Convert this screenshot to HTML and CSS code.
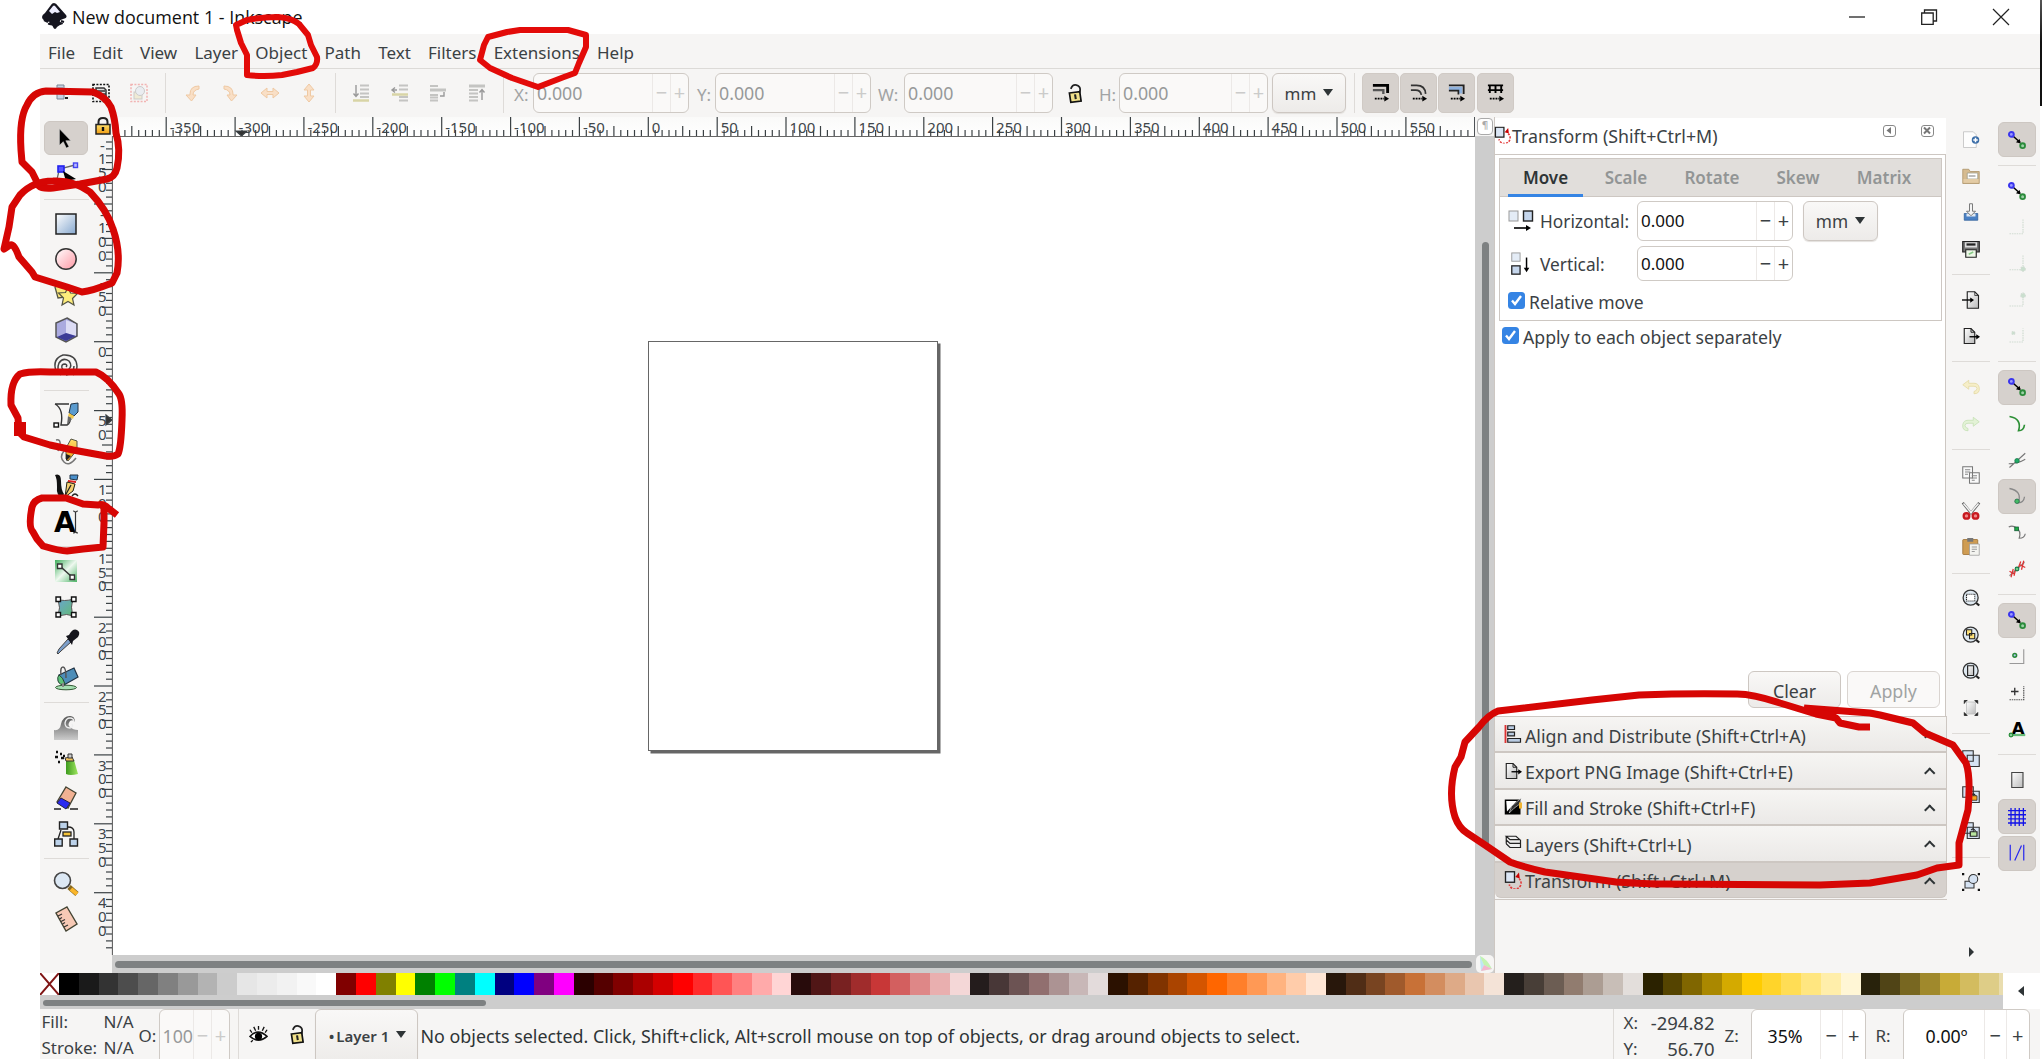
FILE: index.html
```html
<!DOCTYPE html>
<html lang="en">
<head>
<meta charset="utf-8">
<title>New document 1 - Inkscape</title>
<link rel="stylesheet" href="styles.css">
</head>
<body>
<svg class="defs" width="0" height="0">
  <defs>
    <linearGradient id="gBlue" x1="0" y1="0" x2="1" y2="1"><stop offset="0" stop-color="#fff"/><stop offset="1" stop-color="#86a8cf"/></linearGradient>
    <linearGradient id="gPink" x1="0" y1="0" x2="1" y2="1"><stop offset="0" stop-color="#fff"/><stop offset="1" stop-color="#ff98a4"/></linearGradient>
    <linearGradient id="gGreen" x1="0" y1="0" x2="1" y2="1"><stop offset="0" stop-color="#3fae5c"/><stop offset=".5" stop-color="#eef8ef"/><stop offset="1" stop-color="#4db567"/></linearGradient>
    <linearGradient id="gMesh" x1="0" y1="0" x2="1" y2="1"><stop offset="0" stop-color="#6aa5cf"/><stop offset="1" stop-color="#62bb74"/></linearGradient>
    <linearGradient id="gGrey" x1="0" y1="0" x2="1" y2="1"><stop offset="0" stop-color="#fff"/><stop offset="1" stop-color="#bbb"/></linearGradient>
    <linearGradient id="gWave" x1="0" y1="0" x2="0" y2="1"><stop offset="0" stop-color="#555"/><stop offset="1" stop-color="#ccc"/></linearGradient>
    <linearGradient id="gGold" x1="0" y1="0" x2="0" y2="1"><stop offset="0" stop-color="#ffe06a"/><stop offset="1" stop-color="#f09c12"/></linearGradient>
    <linearGradient id="gCan" x1="0" y1="0" x2="1" y2="0"><stop offset="0" stop-color="#3d9a1d"/><stop offset="1" stop-color="#9fe660"/></linearGradient>
    <symbol id="snap" viewBox="0 0 24 24"><path d="M7 7l9 8" stroke="#000" stroke-width="2"/><path d="M17 16.500l-6.500-1.500 5-4.500z" fill="#000"/><circle cx="4.500" cy="4.500" r="3.200" fill="#99f" stroke="#3a35ee" stroke-width="2.600"/><circle cx="19.500" cy="19.500" r="3.200" fill="#9ccfa6" stroke="#2a8a3a" stroke-width="2.400"/></symbol>
    <symbol id="xform" viewBox="0 0 24 24"><rect x="2" y="1" width="12" height="14" fill="#dbe6f5" stroke="#222" stroke-width="1.800"/><path d="M15 8l6 2-1-8z" fill="#c00"/><path d="M20 10a8 8 0 1 1-13 8" fill="none" stroke="#e23b3b" stroke-width="2.200" stroke-dasharray="3 1.600"/></symbol>
    <symbol id="padlock" viewBox="0 0 16 24"><path d="M3 7q2-5 6-4t4 5l-1 5" fill="none" stroke="#222" stroke-width="1.900"/><path d="M1.500 11.500l11-1.500 1.500 10-11 1.500z" fill="#f0e08a" stroke="#111" stroke-width="1.800"/><path d="M7.500 13l.8 5" stroke="#222" stroke-width="2.200"/></symbol>
    <symbol id="export" viewBox="0 0 24 24"><path d="M3 2h9l5 5v15H3z" fill="url(#gGrey)" stroke="#222" stroke-width="1.500"/><path d="M12 2v5h5" fill="none" stroke="#222" stroke-width="1.300"/><path d="M10 13h10" stroke="#000" stroke-width="1.800"/><path d="M24 13l-5-3.500v7z" fill="#000"/></symbol>
    <symbol id="lens" viewBox="0 0 24 24"><path d="M17 17l6 5" stroke="#222" stroke-width="3"/><circle cx="11.500" cy="11.500" r="10" fill="#dfe9f1" stroke="#333" stroke-width="1.700"/></symbol>
  </defs>
</svg>

<div class="app">
  <header class="titlebar">
    <svg class="logo" viewBox="0 0 26 26"><path d="M13 0q2 0 4 3l8 9q2 3-3 4-4 1-3 3 3 0 3 2-4 1-6 3-2 4-4 0 0-2-4-2-3-1 1-3-8-1-8-5 0-2 3-4l6-8q1-2 3-2z" fill="#15151f"/><path d="M8 8l4-5q1-1 2 0l5 6-3 1-2-1-3 2-2-2z" fill="#eef"/><path d="M3 17l4 2M20 18l3 1" stroke="#15151f" stroke-width="2"/></svg>
    <span class="title">New document 1 - Inkscape</span>
    <span class="winbtns">
      <svg viewBox="0 0 16 16"><path d="M0 8h16" stroke="#222" stroke-width="1.300"/></svg>
      <svg viewBox="0 0 16 16"><path d="M3.500 4V1h12v11h-3M.7 4h11.500v11.300H.7z" fill="none" stroke="#222" stroke-width="1.300"/></svg>
      <svg viewBox="0 0 16 16"><path d="M0 0l16 16M16 0L0 16" stroke="#222" stroke-width="1.200"/></svg>
    </span>
  </header>

  <nav class="menubar"><span>File</span><span>Edit</span><span>View</span><span>Layer</span><span>Object</span><span>Path</span><span>Text</span><span>Filters</span><span>Extensions</span><span>Help</span></nav>

  <div class="toolbar">
    <div class="tgroup g1">
      <svg viewBox="0 0 20 20"><path d="M4 2h7v14H4zM5 5h5M5 9h5" fill="#c6d3e4" stroke="#7b8796"/><path d="M12 10h3v2h-3zM12 14h3v2h-3z" fill="#222"/></svg>
      <svg viewBox="0 0 20 20"><rect x="2" y="1.500" width="16" height="17" fill="none" stroke="#111" stroke-width="1.600" stroke-dasharray="2 1.400"/><path d="M5 5h8l2 2v7H7l-2-2zM5 8h9M6 11h9" fill="#ddd" stroke="#333" stroke-width="1.500"/></svg>
      <svg viewBox="0 0 20 20" opacity=".45"><rect x="2" y="1.500" width="16" height="17" fill="none" stroke="#e66" stroke-width="1.500" stroke-dasharray="2 1.400"/><rect x="5" y="9" width="8" height="7" fill="#e9dfb0" stroke="#999"/><circle cx="11" cy="8" r="4.500" fill="#dde4ee" stroke="#999"/></svg>
    </div>
    <div class="tgroup g2">
      <svg viewBox="0 0 20 20"><path d="M17 3q-9 0-9 8v1H4l5.500 6L14 12h-3q0-5 6-6z"/></svg>
      <svg viewBox="0 0 20 20"><path d="M3 3q9 0 9 8v1h4l-5.500 6L6 12h3q0-5-6-6z"/></svg>
      <svg viewBox="0 0 20 20"><path d="M1 10l6-5v3.500h6V5l6 5-6 5v-3.500H7V15z"/></svg>
      <svg viewBox="0 0 20 20"><path d="M10 1l5 6h-3.500v6H15l-5 6-5-6h3.500V7H5z"/></svg>
    </div>
    <div class="tgroup g3">
      <svg viewBox="0 0 20 20"><path d="M9 2.500h9M9 6.500h9M9 10.500h9M9 14h9"/><path class="y" d="M2 17.500h16"/><path class="a" d="M5 2v11M2.500 10.500L5 13.500l2.500-3"/></svg>
      <svg viewBox="0 0 20 20"><path d="M9 2.500h9M9 6.500h9M9 14h9M9 17.500h9"/><path class="y" d="M2 11.500h16"/><path class="a" d="M7 7H2M5 4.500L2 7l3 2.500"/></svg>
      <svg viewBox="0 0 20 20"><path d="M2 3h8M2 12h8M2 17.500h8M2 14.500h8"/><path d="M2 7h16" stroke-width="3"/><path class="a" d="M12 13h4v-4"/></svg>
      <svg viewBox="0 0 20 20"><path d="M2 3h16" stroke-width="3"/><path d="M2 7h9M2 10.500h9M2 14h9M2 17.500h9"/><path class="a" d="M15 17V7M12.500 9.500L15 6.500l2.500 3"/></svg>
    </div>
    <label class="lx">X:</label><div class="spin off sx"><b>0.000</b><i>−</i><i>+</i></div>
    <label class="ly">Y:</label><div class="spin off sy"><b>0.000</b><i>−</i><i>+</i></div>
    <label class="lw">W:</label><div class="spin off sw"><b>0.000</b><i>−</i><i>+</i></div>
    <svg class="tlock" viewBox="0 0 16 24"><use href="#padlock"/></svg>
    <label class="lh">H:</label><div class="spin off sh"><b>0.000</b><i>−</i><i>+</i></div>
    <button class="drop">mm<u></u></button>
    <div class="toggles">
      <svg viewBox="0 0 20 20"><path d="M2 3h15.500v8" fill="none" stroke="#000" stroke-width="3"/><path d="M2 8h11v4" fill="none" stroke="#555" stroke-width="2.500"/><path d="M4 17h10" stroke="#000" stroke-width="2" stroke-dasharray="2 1"/><path d="M19 17l-5-3v6z"/></svg>
      <svg viewBox="0 0 20 20"><path d="M2 3h6q9 0 9.500 9M2 8h5q5 0 6 5" fill="none" stroke="#333" stroke-width="1.800"/><path d="M4 17h10" stroke="#000" stroke-width="2" stroke-dasharray="2 1"/><path d="M19 17l-5-3v6z"/></svg>
      <svg viewBox="0 0 20 20"><path d="M2 3h15.500v9" fill="none" stroke="#222" stroke-width="2"/><path d="M2 4.500h14v7h-4v-3H2z" fill="#8fb2de"/><path d="M2 8.500h10v4" fill="none" stroke="#222" stroke-width="1.800"/><path d="M4 17h10" stroke="#000" stroke-width="2" stroke-dasharray="2 1"/><path d="M19 17l-5-3v6z"/></svg>
      <svg viewBox="0 0 20 20"><path d="M2 3h16M2 8h16M4 2v9M10 2v9M16 2v9" fill="none" stroke="#000" stroke-width="2"/><path d="M4 17h10" stroke="#000" stroke-width="2" stroke-dasharray="2 1"/><path d="M19 17l-5-3v6z"/></svg>
    </div>
  </div>

  <main class="work">
    <aside class="toolbox">
      <span class="t on"><svg viewBox="0 0 24 24"><path d="M7 2v18l4.200-4 3.300 7 3-1.500-3.500-6.500h5.500z" fill="#000" stroke="#ddd" stroke-width=".6"/></svg></span>
      <span class="t"><svg viewBox="0 0 24 24"><path d="M3 22Q3 8 9 6l12-3" fill="none" stroke="#666" stroke-width="1.300"/><rect x="4" y="4" width="6" height="6" fill="#55f" stroke="#22e" stroke-width="1.600"/><rect x="19.500" y="1" width="4" height="4.500" fill="#bbf" stroke="#44e" stroke-width="1.400"/><rect x="1" y="20" width="4" height="4" fill="#bbf" stroke="#44e" stroke-width="1.400"/><path d="M9 9l13 8-5 1 6 6-3 1-5-6-2 4z"/></svg></span>
      <hr>
      <span class="t"><svg viewBox="0 0 24 24"><rect x="2" y="2" width="20" height="20" fill="url(#gBlue)" stroke="#222" stroke-width="1.500"/></svg></span>
      <span class="t"><svg viewBox="0 0 24 24"><circle cx="12" cy="12" r="10.200" fill="url(#gPink)" stroke="#333" stroke-width="1.500"/></svg></span>
      <span class="t"><svg viewBox="0 0 24 24"><path d="M1 4l7-3 7 3-3 10-8 1z" fill="#fbe77a" stroke="#554" stroke-width="1.300"/><path d="M14 4l2.500 6 7 .5-5 5 1.500 6.500-6-3.500-6 3.500 1.500-7-5-5 7-.5z" fill="#fdec7c" stroke="#554" stroke-width="1.200"/></svg></span>
      <span class="t"><svg viewBox="0 0 24 24"><path d="M13 0l10 6v12l-11 6-10-5V5z" fill="#aaaadf" stroke="#555" stroke-width="1.500"/><path d="M12 2v13l10 3V6z" fill="#dcdcf4"/><path d="M12 15l-9 4 9 4 10-5z" fill="#3c3c96"/></svg></span>
      <span class="t"><svg viewBox="0 0 24 24"><path d="M12 13q2-2-1-3-4 0-3 4 2 4 6 2 5-4 1-9-6-4-10 2-3 7 2 12M2 17Q-2 5 9 1q13-1 14 11 0 6-4 9M20 12q0 8-8 9" fill="none" stroke="#444" stroke-width="1.500"/></svg></span>
      <hr>
      <span class="t"><svg viewBox="0 0 24 24"><path d="M1 1h14M1 1q9 5 6 21h6q4-2 3-8" fill="none" stroke="#333" stroke-width="1.400"/><rect x="0" y="20" width="4.500" height="4" fill="#fff" stroke="#111" stroke-width="1.400"/><path d="M17 1l7-1v9l-4 4-5-3z" fill="#5b9bcf" stroke="#234"/><path d="M15 10l5 3-1 3-5-3z" fill="#f1c84a"/><path d="M14 13l4 3-5 6z" fill="#666"/></svg></span>
      <span class="t"><svg viewBox="0 0 24 24"><path d="M2 1q5-1 4 5l-2 6M10 12Q5 18 10 23t12-4" fill="none" stroke="#777" stroke-width="1.500"/><path d="M17 0l6 2v9l-9 11-2-2V9z" fill="url(#gGold)" stroke="#554"/><path d="M12 15l5 2-5 5z" fill="#222"/></svg></span>
      <span class="t"><svg viewBox="0 0 24 24"><path d="M1 1q6-2 6 6 0 9 3 13l-2 4q-6-3-5-11Q3 4 1 1z" fill="#111"/><path d="M16 1l8 0-1 5-7-1z" fill="#4a90cc" stroke="#234"/><path d="M14 6l8 1v2l-8-1z" fill="#d22"/><path d="M13 8l8 2-2 7-8 6z" fill="#f4cf70" stroke="#221"/><path d="M17 11l-6 11M18 22q3-4 6 0" fill="none" stroke="#222" stroke-width="1.300"/></svg></span>
      <span class="t"><svg viewBox="0 0 24 24"><text x="0" y="22" class="atext">A</text><path d="M19 1q2 0 2.500 1.500Q22 1 24 1M21.500 2v20M19 23q2 0 2.500-1.500Q22 23 24 23" fill="none" stroke="#333" stroke-width="1.200"/></svg></span>
      <hr>
      <span class="t"><svg viewBox="0 0 24 24"><rect x="1" y="1" width="22" height="22" fill="url(#gGreen)"/><path d="M7 8l11 10" stroke="#333" stroke-width="1.500"/><path d="M3.500 5h4.500v4.500H3.500zM16 16h4.500v4.500H16z" fill="#fff" stroke="#333" stroke-width="1.400"/></svg></span>
      <span class="t"><svg viewBox="0 0 24 24"><path d="M4 4q5 3 16 0-5 8 0 17-7-3-16 0 3-8 0-17z" fill="url(#gMesh)" stroke="#555"/><path d="M2 2h4.500v4.500H2zM17.500 2H22v4.500h-4.500zM2 17.500h4.500V22H2zM17.500 17.500H22V22h-4.500z" fill="#fff" stroke="#111" stroke-width="1.400"/></svg></span>
      <span class="t"><svg viewBox="0 0 24 24"><path d="M14 9l3 3L7 21l-3 3-1-1 2-4z" fill="#7d9fca" stroke="#444"/><path d="M12 6l3-1q4-7 8-5t1 7l-5 4-1 4z" fill="#15151c"/></svg></span>
      <span class="t"><svg viewBox="0 0 24 24"><ellipse cx="12" cy="21.500" rx="10.500" ry="2.300" fill="#a5e0b2" stroke="#353"/><path d="M5 9L20 2l4 9-14 8z" fill="#4d8db8" stroke="#234" stroke-width="1.200"/><path d="M5 9q4 2 6 9-5 2-7-3-1-4 1-6z" fill="#5fc27a" stroke="#243"/><path d="M7 9q-1-8 2-8t3 11" fill="none" stroke="#555" stroke-width="1.500"/><path d="M9 17v4" stroke="#888" stroke-width="2"/></svg></span>
      <hr>
      <span class="t"><svg viewBox="0 0 24 24"><path d="M0 14q6 1 7-6 2-8 9-8 5 0 5 6-2-3-5-1-3 4 0 6 3 3 8 3v10H0z" fill="url(#gWave)"/><path d="M20 6q0-4-4-4t-5 5q0 5 5 5 4-1 2-4" fill="none" stroke="#eee" stroke-width="1.300"/></svg></span>
      <span class="t"><svg viewBox="0 0 24 24"><path d="M12 9l8 0 4 14q-8 2-12 0z" fill="url(#gCan)"/><path d="M11 7l7-1 2 4h-8z" fill="#f0c15a" stroke="#333"/><path d="M14 3h4v4h-4z" fill="#ccc" stroke="#333"/><path d="M2 1h2M6 3h2M1 6h3M7 7h3M9 5h2M4 11h2" stroke="#111" stroke-width="2.400"/></svg></span>
      <span class="t"><svg viewBox="0 0 24 24"><path d="M12 1l10 6-8 15-11-6z" fill="#f1b193" stroke="#443" stroke-width="1.300"/><path d="M7 12l9 5-4 6-9-6z" fill="#2a2af0" stroke="#224"/><path d="M0 23h7M16 23h8" stroke="#222" stroke-width="1.500"/></svg></span>
      <span class="t"><svg viewBox="0 0 24 24"><path d="M7 8L4 17M14 5q6 0 6 5v8" fill="none" stroke="#222" stroke-width="1.300"/><path d="M5.500 0h8v7h-8zM.7 17h7.500v7H.7zM16 17h7.500v7H16z" fill="#bcd2ea" stroke="#222" stroke-width="1.400"/><rect x="9" y="10" width="8" height="4" fill="#f5c338" stroke="#222" stroke-width="1.300"/></svg></span>
      <hr>
      <span class="t"><svg viewBox="0 0 24 24"><path d="M15 15l8 7" stroke="#8a6a20" stroke-width="5"/><path d="M17 17l6 5" stroke="#fbb62a" stroke-width="4"/><circle cx="8.500" cy="8.500" r="8" fill="#dce8f4" stroke="#444" stroke-width="1.600"/></svg></span>
      <span class="t"><svg viewBox="0 0 24 24"><path d="M13 0l10 17-11 7L2 6z" fill="#f7c9b5" stroke="#443" stroke-width="1.400"/><path d="M4 9l4-2M5.500 12L8 10.500M7 14.500l4-2M8.500 17l2.500-1.500M10 20l4-2" stroke="#333" stroke-width="1.200"/></svg></span>
    </aside>

    <section class="stage">
      <div class="corner"><svg viewBox="0 0 18 18"><path d="M4.500 8V5q0-4 4.500-4t4.500 4v3" fill="none" stroke="#222" stroke-width="2"/><rect x="2" y="7.500" width="14" height="9.500" fill="url(#gGold)" stroke="#222" stroke-width="1.500"/><path d="M9 10v4" stroke="#111" stroke-width="2.400"/></svg></div>
      <svg class="hruler" id="hruler" width="1362" height="20"></svg>
      <div class="cornerR"><span>¶</span></div>
      <svg class="vruler" id="vruler" width="22" height="837"></svg>
      <div class="canvas"><div class="page"></div></div>
      <div class="vscroll"><span></span></div>
      <div class="blank"></div>
      <div class="hscroll"><span></span></div>
      <div class="cms"><svg viewBox="0 0 18 18"><path d="M4 1L5 16l11-2Q11 4 4 1z" fill="#d6f0e2"/><path d="M4 1l4 9-3 6z" fill="#bfe6f5"/><path d="M4 1q7 3 12 13l-8-4z" fill="#c4f3b0"/><path d="M8 10l8 4-11 2z" fill="#f3b6cd"/></svg></div>
    </section>

    <section class="dock">
      <div class="dockhead"><svg viewBox="0 0 24 24"><use href="#xform"/></svg><span>Transform (Shift+Ctrl+M)</span>
        <em><svg viewBox="0 0 10 9"><path d="M7 1v7L2.500 4.500z"/></svg></em><em><svg viewBox="0 0 10 9"><path d="M2 1.500l6 6M8 1.500l-6 6" stroke="#777" stroke-width="2"/></svg></em></div>
      <div class="panel">
        <div class="book">
          <div class="tabs"><span class="cur">Move</span><span>Scale</span><span>Rotate</span><span>Skew</span><span>Matrix</span></div>
          <div class="row r1"><svg viewBox="0 0 26 22"><rect x="1" y="1" width="9" height="10" fill="#e4ecf6" stroke="#999"/><rect x="15.500" y="1" width="9" height="10" fill="#c5d6ec" stroke="#222" stroke-width="1.400"/><path d="M6 18h13" stroke="#000" stroke-width="1.600"/><path d="M23 18l-5-3v6z"/></svg><label>Horizontal:</label><div class="spin"><b>0.000</b><i>−</i><i>+</i></div><button class="drop">mm<u></u></button></div>
          <div class="row r2"><svg viewBox="0 0 26 26"><rect x="3" y="1" width="9" height="9" fill="#e4ecf6" stroke="#999"/><rect x="3" y="15" width="9" height="9" fill="#c5d6ec" stroke="#222" stroke-width="1.400"/><path d="M19 6v12" stroke="#000" stroke-width="1.600"/><path d="M19 22l-3-5h6z"/></svg><label>Vertical:</label><div class="spin"><b>0.000</b><i>−</i><i>+</i></div></div>
          <div class="check c1"><svg viewBox="0 0 17 17"><path d="M4 8.500l3 3.500 6-8"/></svg>Relative move</div>
        </div>
        <div class="check c2"><svg viewBox="0 0 17 17"><path d="M4 8.500l3 3.500 6-8"/></svg>Apply to each object separately</div>
        <div class="actions"><button>Clear</button><button class="dis">Apply</button></div>
      </div>
      <div class="stack">
        <div><svg viewBox="0 0 24 24"><path d="M2 0v24" stroke="#d33" stroke-width="2.500"/><path d="M5 1h9v5H5zM5 9.500h9v5H5zM5 18h17v5H5z" fill="#b9cbe2" stroke="#222" stroke-width="1.600"/></svg>Align and Distribute (Shift+Ctrl+A)<s></s></div>
        <div><svg viewBox="0 0 24 24"><use href="#export"/></svg>Export PNG Image (Shift+Ctrl+E)<s></s></div>
        <div><svg viewBox="0 0 24 24"><rect x="1" y="2" width="21" height="20"/><path d="M3 4h14L4 18z" fill="#fff"/><path d="M23 0l-2 8-8 6-6 6 3-9z" fill="#333" stroke="#fff" stroke-width=".7"/><path d="M20 6l4 0v8h-4z" fill="#f2b632"/></svg>Fill and Stroke (Shift+Ctrl+F)<s></s></div>
        <div><svg viewBox="0 0 24 24"><path d="M3 3h13l5 4.500H8zM3 8l5 4.500h14M3 13l5 5h14V7.500M3 3v10" fill="#eee" stroke="#222" stroke-width="1.600"/></svg>Layers (Shift+Ctrl+L)<s></s></div>
        <div class="sel"><svg viewBox="0 0 24 24"><use href="#xform"/></svg>Transform (Shift+Ctrl+M)<s></s></div>
      </div>
    </section>

    <aside class="bar cmds">
      <span class="t"><svg viewBox="0 0 24 24"><path d="M2 1h13l4 4v17H2z" fill="#fdfdfd" stroke="#bbb"/><circle cx="18" cy="12" r="5" fill="#3c6ea8"/><path d="M18 9v6M15 12h6" stroke="#fff" stroke-width="2"/></svg></span>
      <span class="t"><svg viewBox="0 0 24 24"><path d="M1 3h8l2 3h12v16H1z" fill="#d6bb90" stroke="#a98f62"/><path d="M7 8h14v8H7z" fill="#fff" stroke="#998"/><path d="M9 12h9" stroke="#888" stroke-width="1.500"/><path d="M2 16h20v5H2z" fill="#e3cba4"/></svg></span>
      <span class="t"><svg viewBox="0 0 24 24"><path d="M3 14h18v9H3z" fill="#4a80c4" stroke="#2d5c98"/><path d="M6 14h12v4H6z" fill="#dfe8f2"/><path d="M10 1h4v10h4l-6 6-6-6h4z" fill="#f4f4f4" stroke="#777" stroke-width="1.300"/></svg></span>
      <span class="t"><svg viewBox="0 0 24 24"><path d="M1 2h22v14H1z" fill="#777" stroke="#222" stroke-width="1.600"/><path d="M4 3h16v7H4z" fill="#ddd"/><path d="M6 6h12" stroke="#222" stroke-width="3"/><path d="M5 13h14v10H5z" fill="#eef8e8" stroke="#222" stroke-width="1.500"/><path d="M9 19l6-3" stroke="#8c8" stroke-width="2"/></svg></span>
      <hr>
      <span class="t"><svg viewBox="0 0 24 24"><path d="M7 1h10l5 5v17H7z" fill="url(#gGrey)" stroke="#222" stroke-width="1.500"/><path d="M17 1v5h5" fill="none" stroke="#222"/><path d="M0 12h12" stroke="#000" stroke-width="1.800"/><path d="M16 12l-5-3.500v7z"/></svg></span>
      <span class="t"><svg viewBox="0 0 24 24"><use href="#export"/></svg></span>
      <hr>
      <span class="t"><svg viewBox="0 0 24 24"><path d="M9 3L1 9l8 6v-4h7q4 0 4 3t-4 4v3q8 0 7-8-1-6-7-6H9z" fill="#f6eec8" stroke="#e2d79f"/></svg></span>
      <span class="t"><svg viewBox="0 0 24 24"><path d="M15 3l8 6-8 6v-4H8q-4 0-4 3t4 4v3q-8 0-7-8 1-6 7-6h7z" fill="#e3f2d6" stroke="#c2dfb0"/></svg></span>
      <hr>
      <span class="t"><svg viewBox="0 0 24 24"><path d="M1 1h13v15H1zM10 9h13v14H10z" fill="#fafafa" stroke="#777" stroke-width="1.400"/><path d="M4 5h7M4 8h7M4 11h4M13 13h7M13 16h7M13 19h4" stroke="#888" stroke-width="1.400"/></svg></span>
      <span class="t"><svg viewBox="0 0 24 24"><path d="M1 1l12 15M23 1L11 16" stroke="#666" stroke-width="3.600"/><path d="M2 2l11 13M22 2L11 15" stroke="#f2f2f2" stroke-width="2"/><circle cx="6" cy="18.500" r="3.800" fill="#e88" stroke="#c8191f" stroke-width="3"/><circle cx="18" cy="18.500" r="3.800" fill="#e88" stroke="#c8191f" stroke-width="3"/></svg></span>
      <span class="t"><svg viewBox="0 0 24 24"><rect x="1" y="2" width="20" height="20" rx="1" fill="#cf9c52" stroke="#97692b"/><rect x="7" y="0" width="8" height="5" fill="#777"/><path d="M10 8h13v15H10z" fill="#f4f4f0" stroke="#999"/><path d="M13 12h7M13 15h7M13 18h4" stroke="#999" stroke-width="1.300"/></svg></span>
      <hr>
      <span class="t"><svg viewBox="0 0 24 24"><use href="#lens"/><rect x="6" y="7" width="11" height="9" fill="#fff" stroke="#222" stroke-width="1.500" stroke-dasharray="1.500 1.200"/></svg></span>
      <span class="t"><svg viewBox="0 0 24 24"><use href="#lens"/><path d="M6 5h7v7H6zM10 10h7v7h-7z" fill="#ffe27a" stroke="#222" stroke-width="1.400"/></svg></span>
      <span class="t"><svg viewBox="0 0 24 24"><use href="#lens"/><path d="M7.500 5h8v13h-8z" fill="url(#gGrey)" stroke="#222" stroke-width="1.600"/></svg></span>
      <span class="t"><svg viewBox="0 0 24 24"><path d="M6 4h12v16H6z" fill="url(#gGrey)" stroke="#bbb"/><path d="M3 6V2h4l-2 1zM17 2h4v4l-2-2zM3 18v4h4l-2-2zM17 22h4v-4l-2 2z" fill="#222" stroke="#222"/></svg></span>
      <hr>
      <span class="t"><svg viewBox="0 0 24 24"><path d="M1 1h14v14H1zM7 7h16v15H7z" fill="#d5e2f2" stroke="#333" stroke-width="1.500"/></svg></span>
      <span class="t"><svg viewBox="0 0 24 24"><path d="M1 1h14v14H1zM7 7h16v15H7z" fill="#d5e2f2" stroke="#333" stroke-width="1.500"/><path d="M12 13q3-5 6 0" fill="none" stroke="#222" stroke-width="1.500"/><path d="M11 13h9v6h-9z" fill="#f5a623" stroke="#222"/></svg></span>
      <span class="t"><svg viewBox="0 0 24 24"><path d="M1 1h14v14H1zM7 7h16v15H7z" fill="#d5e2f2" stroke="#333" stroke-width="1.500"/><path d="M12 11q3-4 6 1" fill="none" stroke="#222" stroke-width="1.500"/><path d="M11 13h9v6h-9z" fill="#b9e59f" stroke="#222" stroke-width="1.600"/></svg></span>
      <hr>
      <span class="t"><svg viewBox="0 0 24 24"><path d="M4 11h12v9H4z" fill="#d5e2f2" stroke="#333" stroke-width="1.400"/><circle cx="15" cy="8" r="6" fill="#d5e2f2" stroke="#333" stroke-width="1.400"/><path d="M0 0h3v3H0zM21 0h3v3h-3zM0 21h3v3H0zM21 21h3v3h-3z" fill="#111"/></svg></span>
      <span class="more"></span>
    </aside>

    <aside class="bar snaps">
      <span class="t on"><svg viewBox="0 0 24 24"><use href="#snap"/></svg></span>
      <hr>
      <span class="t"><svg viewBox="0 0 24 24"><use href="#snap"/></svg></span>
      <span class="t"><svg viewBox="0 0 24 24" class="faint"><path d="M2 21h18V2"/></svg></span>
      <span class="t"><svg viewBox="0 0 24 24" class="faint g"><path d="M2 21h18V2"/><circle cx="20" cy="20" r="3"/></svg></span>
      <span class="t"><svg viewBox="0 0 24 24" class="faint g"><path d="M2 20h18V2"/><circle cx="20" cy="6" r="3"/></svg></span>
      <span class="t"><svg viewBox="0 0 24 24" class="faint g"><path d="M2 20h18V2"/><circle cx="7" cy="8" r="2"/></svg></span>
      <hr>
      <span class="t on"><svg viewBox="0 0 24 24"><use href="#snap"/></svg></span>
      <span class="t"><svg viewBox="0 0 24 24"><path d="M2 2q17 3 12 19 7 0 8-8" fill="none" stroke="#2c8f35" stroke-width="2.200"/></svg></span>
      <span class="t"><svg viewBox="0 0 24 24"><path d="M2 22L23 3M1 17q12 0 22-6" fill="none" stroke="#777" stroke-width="1.500"/><circle cx="12" cy="13" r="3" fill="#2a6" stroke="#174"/></svg></span>
      <span class="t on"><svg viewBox="0 0 24 24"><path d="M2 2q17 3 12 19 7 0 8-8" fill="none" stroke="#888" stroke-width="1.700"/><circle cx="12" cy="19" r="3" fill="#4b6" stroke="#264"/></svg></span>
      <span class="t"><svg viewBox="0 0 24 24"><path d="M1 4q5-3 10 1 7 4 4 14 7 0 8-6" fill="none" stroke="#777" stroke-width="1.600"/><rect x="9" y="4" width="5" height="5" fill="#2a4" stroke="#153"/></svg></span>
      <span class="t"><svg viewBox="0 0 24 24"><path d="M2 21L22 3" stroke="#888" stroke-width="1.500"/><path d="M2 15l7 4M4 23l3-11M8 21l2-8M14 10l3-8M15 6l8 4M18 13l3-12" stroke="#d33" stroke-width="1.700"/><circle cx="12" cy="12" r="2.500" fill="#7c8" stroke="#174" stroke-width="1.400"/></svg></span>
      <hr>
      <span class="t on"><svg viewBox="0 0 24 24"><use href="#snap"/></svg></span>
      <span class="t"><svg viewBox="0 0 24 24"><path d="M2 22h19V3" fill="none" stroke="#999" stroke-width="1.500"/><circle cx="9" cy="11" r="2.500" fill="#ace" stroke="#2a8a3a" stroke-width="2"/></svg></span>
      <span class="t"><svg viewBox="0 0 24 24"><path d="M2 21h19V3" fill="none" stroke="#555" stroke-width="1.600" stroke-dasharray="2 1"/><path d="M9 5v10M4 10h10" stroke="#333" stroke-width="1.800"/></svg></span>
      <span class="t"><svg viewBox="0 0 24 24"><path d="M4 20h19" stroke="#6b7" stroke-width="3"/><text x="5" y="19" class="snaptext">A</text><circle cx="4" cy="20" r="2.500" fill="#8c9" stroke="#283" stroke-width="1.500"/></svg></span>
      <hr>
      <span class="t"><svg viewBox="0 0 24 24"><path d="M5 2h15v20H5z" fill="url(#gGrey)" stroke="#444" stroke-width="1.500"/></svg></span>
      <span class="t on"><svg viewBox="0 0 24 24"><path d="M4 0v24M9.500 0v24M15 0v24M20.500 0v24M0 3.500h24M0 9h24M0 14.500h24M0 20h24" stroke="#1313e8" stroke-width="1.700"/></svg></span>
      <span class="t on"><svg viewBox="0 0 24 24"><path d="M3 1v21M21 1v21M9 22L18 2" stroke="#2626ee" stroke-width="1.600"/></svg></span>
    </aside>
  </main>

  <div class="palette" id="palette"><svg class="none" viewBox="0 0 19 22"><path d="M0 0l19 22M19 0L0 22" stroke="#801515" stroke-width="2"/></svg></div>
  <div class="palscroll"><span></span></div>

  <footer class="status">
    <div class="fs"><span>Fill:</span><span>N/A</span><span>Stroke:</span><span>N/A</span></div>
    <label class="lo">O:</label><div class="spin off so"><b>100</b><i>−</i><i>+</i></div>
    <div class="icons">
      <svg class="eye" viewBox="0 0 20 20"><path d="M1 12q8-9 18 0-9 8-18 0z" fill="#fff" stroke="#111" stroke-width="1.600"/><circle cx="10" cy="12" r="3.800"/><path d="M3 8L1 5M7 6L5 2M10 5V1M14 6l2-4M17 8l2-3M4 16l-2 2" stroke="#111" stroke-width="1.400"/></svg>
      <svg class="lk" viewBox="0 0 16 24"><use href="#padlock"/></svg>
    </div>
    <button class="drop layer"><span>•</span>Layer 1<u></u></button>
    <p>No objects selected. Click, Shift+click, Alt+scroll mouse on top of objects, or drag around objects to select.</p>
    <div class="xy"><span>X:</span><span>-294.82</span><span>Y:</span><span>56.70</span></div>
    <label class="lz">Z:</label><div class="spin sz"><b>35%</b><i>−</i><i>+</i></div>
    <label class="lr">R:</label><div class="spin sr"><b>0.00º</b><i>−</i><i>+</i></div>
  </footer>
</div>

<div class="edge"></div>
<span class="palmenu"></span>
<svg class="ink" width="2042" height="1059" viewBox="0 0 2042 1059">
  <g class="bright">
    <path d="M236 25L247 20Q262 17 278 17Q292 18 299 24L308 35L311 45L317 57Q318 64 313 68L297 72L282 75Q264 77 247 75L247 55L241 43L237 30Z"/>
    <path d="M480 60L484 45L488 37L507 32L520 30H568L586 35V47L579 63L575 73L564 77L538 87L512 78L490 68Z"/>
  </g>
  <path d="M22 162L21 150Q19 118 27 105Q33 92 46 91L93 92Q106 97 111 107Q115 118 116 133Q121 150 117 168Q115 177 107 179L80 184L53 188Q42 189 39 186L32 172Z"/>
  <path d="M4 249L9 227L12 207L20 195Q33 181 53 181Q74 180 90 192Q107 210 113 229Q121 252 117 273L112 283Q92 291 82 292L67 287L35 277L32 272L19 257Q14 243 10 245Z"/>
  <path d="M19 432L18 418L11 405Q10 382 20 374Q30 371 50 372L96 372Q108 377 119 394Q123 400 122 420Q121 448 118 454Q114 457 106 456L73 450L50 445L24 437Z"/>
  <path d="M117 515L108 508Q103 503 98 505L83 504L66 498H42Q34 500 32 507Q28 527 33 532L37 539L43 546Q60 551 67 551L83 549L103 547L104 523V506"/>
  <path d="M20 422v14" stroke-width="12"/>
  <g transform="translate(-2 0)">
    <path d="M1872 727H1861L1842 723L1838 718L1818 714L1782 703Q1755 694 1739 694Q1690 693 1641 695L1594 700L1500 711Q1490 715 1481 727L1467 742L1463 757L1457 767Q1450 795 1457 817Q1461 828 1469 833L1487 845L1512 862Q1525 867 1547 872Q1590 878 1618 882Q1650 884 1665 884L1822 885L1872 883L1919 875L1939 868L1961 865V843L1970 810Q1973 777 1968 763L1955 745L1927 733L1915 723L1882 715L1872 713L1806 708"/>
    <path d="M1816 712L1838 716" stroke-width="7"/>
  </g>
</svg>
<script src="app.js"></script>
</body>
</html>
```
FILE: styles.css
```css
* { box-sizing: border-box; }
body { margin: 0; width: 2042px; height: 1059px; overflow: hidden; background: #fff; font: 17px/20px "Noto Sans", sans-serif; color: #3b4144; }
button { font: inherit; color: inherit; padding: 0; }
hr { margin: 0; border: 0; }
.defs { position: absolute; }
.app { margin-left: 40px; width: 2000px; height: 1059px; display: flex; flex-direction: column; overflow: hidden; }
.app > * { flex: none; }

.titlebar { height: 34px; display: flex; align-items: center; background: #fff; margin-left: -2px; }
.logo { width: 26px; height: 26px; margin: 0 0 2px 3px; }
.title { font: 17.900px/20px "Open Sans", sans-serif; color: #111; margin-left: 5px; white-space: nowrap; }
.winbtns { margin-left: auto; display: flex; gap: 56px; margin-right: 31px; }
.winbtns svg { width: 16px; height: 16px; overflow: visible; }

.menubar { height: 35px; background: #f6f5f4; border-bottom: 1px solid #dcdad7; display: flex; align-items: center; padding: 4px 0 0 8px; gap: 17.200px; }

.toolbar { height: 48px; background: #f6f5f4; display: flex; align-items: center; padding-top: 0; }
.tgroup { height: 40px; border-right: 1px solid #dedbd8; display: flex; align-items: center; }
.tgroup svg { width: 20px; height: 20px; }
.g1 { width: 126px; padding-left: 13px; gap: 18px; }
.g2 { width: 170px; padding-left: 16px; gap: 19px; }
.g2 svg { fill: #f9dfc6; stroke: #efc9a3; }
.g3 { width: 168px; padding-left: 15px; gap: 18.500px; }
.g3 svg { fill: none; stroke: #c4c4c2; stroke-width: 1.800; }
.g3 .y { stroke: #d8d4a6; stroke-width: 2.500; }
.g3 .a { stroke: #999; stroke-width: 1.400; }
.toolbar label { color: #a2a4a4; padding-top: 3px; }
.lx { width: 29px; padding-left: 10px; }
.ly { width: 26px; padding-left: 8px; }
.lw { width: 33px; padding-left: 7px; }
.lh { width: 36px; padding-left: 16px; }
.spin { height: 40px; display: flex; align-items: stretch; background: #fff; border: 1.500px solid #cfcac5; border-radius: 6px; overflow: hidden; color: #3b4144; }
.spin b { flex: 1; font-weight: 400; font-size: 17.800px; display: flex; align-items: center; padding-left: 3px; color: #111; white-space: nowrap; }
.spin i { width: 18px; flex: none; font-style: normal; font-size: 20px; display: flex; align-items: center; justify-content: center; border-left: 1px solid #ece9e7; }
.off { background: #faf9f8; }
.off b { color: #97999a; }
.off i { color: #cbcbca; }
.sx { width: 156px; } .sy { width: 156px; } .sw { width: 149px; } .sh { width: 149px; }
.tlock { width: 15px; height: 23px; margin-left: 15px; }
.drop { height: 40px; border: 1.500px solid #cdc7c2; border-radius: 6px; background: linear-gradient(#f9f8f7, #edebe9); display: flex; align-items: center; justify-content: center; box-shadow: 0 1px 1px #e3e0dd; padding-top: 2px; }
.drop u { border: 5px solid transparent; border-top: 7px solid #2e3436; border-bottom: 0; margin-left: 7px; margin-top: -3px; }
.toolbar .drop { width: 74px; margin-left: 4px; }
.toggles { display: flex; gap: 1.200px; margin-left: 8px; padding-left: 7px; border-left: 1px solid #dedbd8; }
.toggles svg { width: 37px; height: 40px; padding: 8px 8px 10px; background: #d6d1cd; border-radius: 5px; border: 1px solid #d0cac5; }

.work { height: 856px; display: flex; background: #f6f5f4; }
.toolbox { width: 53px; padding-top: 4px; display: flex; flex-direction: column; }
.t { flex: none; display: flex; align-items: center; justify-content: center; border-radius: 6px; }
.t svg { display: block; overflow: visible; }
.toolbox .t { height: 35.400px; width: 44px; margin-left: 4px; padding-right: 1px; }
.toolbox .t svg { width: 24px; height: 24px; }
.toolbox hr { height: 14.500px; width: 45px; margin-left: 4px; background: linear-gradient(#dedbd8, #dedbd8) 0 7px / 100% 1px no-repeat; flex: none; }
.on { background: #d6d1cd; border: 1px solid #cdc7c2; }
.toolbox .on { height: 34px; margin-bottom: 1.400px; }
.toolbox .t.on svg { width: 22px; height: 22px; margin-right: 4px; }
.atext { font: bold 28px "DejaVu Sans", sans-serif; }
.snaptext { font: bold 22px "DejaVu Sans", sans-serif; }

.stage { width: 1402px; display: grid; grid-template-columns: 20px 1362px 20px; grid-template-rows: 19px 819px 18px; }
.corner svg { width: 18px; height: 18px; display: block; }
.corner { padding-left: 1px; }
.hruler, .vruler { display: block; }
.hruler { background: linear-gradient(#fafaf9, #fff); }
.vruler { margin-left: -2px; background: #f6f5f4; }
.hruler, .vruler { stroke: #3b4144; stroke-width: 1.200; }
.hruler text, .vruler text { font: 15px "Noto Sans", sans-serif; fill: #40464a; stroke: none; }
.canvas { background: #fff; border-top: 1.500px solid #666; border-left: 1px solid #666; margin-left: -1px; }
.page { width: 290px; height: 410px; margin: 204px 0 0 535px; border: 1px solid #666; box-shadow: 2.500px 2.500px 0 #666; background: #fff; }
.cornerR { display: flex; justify-content: center; align-items: center; }
.cornerR span { width: 16px; height: 17px; border: 1.500px solid #aaa; border-radius: 4px; color: #aaa; font: 11px/14px "DejaVu Sans", sans-serif; text-align: center; background: #fff; }
.vscroll { background: #cdcdcd; padding: 106px 0 0 7px; }
.vscroll span { display: block; width: 6.500px; height: 604px; border-radius: 4px; background: #7e8182; }
.hscroll { background: #cdcdcd; padding: 6px 0 0 3px; margin-left: -1px; }
.hscroll span { display: block; width: 1357px; height: 7px; border-radius: 4px; background: #7e8182; }
.cms { background: #cdcdcd; padding: 0 1px; }
.cms svg { width: 18px; height: 18px; display: block; background: #f6f5f4; border-radius: 5px; }

.dock { width: 454px; margin-left: -1px; padding-top: 1px; border-left: 1px solid #cdc7c2; font-size: 17.800px; }
.dockhead { height: 36px; background: #fff; display: flex; align-items: center; white-space: nowrap; width: 451px; padding-top: 0; }
.dockhead > svg { width: 17px; height: 18px; margin: -3px 0 0 -1px; flex: none; }
.dockhead span { margin-left: 1px; width: 371px; flex: none; }
.dockhead em { width: 13px; height: 12px; border: 1.500px solid #888; border-radius: 3px; margin: -11px 25px 0 0; display: block; background: #fff; line-height: 0; flex: none; }
.dockhead em + em { margin-right: 0; }
.dockhead em svg { width: 10px; height: 9px; fill: #777; display: block; }
.panel { height: 562px; width: 451px; background: #fff; border-top: 1.500px solid #cdc7c2; border-right: 1.500px solid #cdc7c2; padding: 3px 3px 0 4px; display: flex; flex-direction: column; }
.book { height: 163px; border: 1.500px solid #cdc7c2; }
.tabs { height: 38px; background: #e1dedb; border-bottom: 1.500px solid #cdc7c2; display: flex; padding-left: 8px; font-size: 17px; font-weight: 600; color: #929595; }
.tabs span { width: 76px; text-align: center; line-height: 38px; height: 38px; flex: none; }
.tabs span:nth-child(3), .tabs span:nth-child(5) { width: 96px; }
.tabs .cur { width: 75px; color: #2e3436; border-bottom: 3.500px solid #3584e4; margin-right: 5px; }
.row { display: flex; align-items: center; padding-left: 8px; font-size: 17.300px; }
.row > svg { width: 26px; height: 24px; flex: none; }
.row label { width: 103px; padding-left: 6px; padding-top: 2px; white-space: nowrap; flex: none; }
.row .spin { width: 156px; margin-left: 0; }
.row .spin b { font-size: 17px; }
.r1 { margin-top: 4px; height: 40px; }
.r1 .drop { width: 75px; margin-left: 10px; }
.r2 { height: 35px; margin-top: 5px; }
.r2 .spin { height: 35px; }
.check { display: flex; align-items: center; gap: 4px; white-space: nowrap; font-size: 17.700px; }
.check svg { width: 17px; height: 17px; background: #3584e4; border-radius: 3.500px; margin-top: -4px; }
.check path { fill: none; stroke: #fff; stroke-width: 2.400; }
.c1 { padding-left: 8px; margin-top: 9px; height: 24px; font-size: 17.500px; }
.c2 { padding-left: 3px; margin-top: 4px; height: 24px; }
.actions { margin-top: auto; margin-bottom: 8px; display: flex; justify-content: flex-end; gap: 6px; padding-right: 2px; }
.actions button { width: 93px; height: 37px; border: 1.500px solid #cdc7c2; border-radius: 6px; background: linear-gradient(#f9f8f7, #edebe9); padding-top: 2px; }
.actions .dis { background: #faf9f8; color: #a0a3a3; border-color: #dad5d1; }
.stack { width: 452px; padding-bottom: 1px; border-bottom: 1px solid #cdc7c2; }
.stack div { height: 36.400px; border: 1.500px solid #cdc7c2; border-left: 0; border-bottom-width: 1px; background: linear-gradient(#f6f5f3, #ebe9e7); display: flex; align-items: center; padding: 3px 0 0 9px; white-space: nowrap; }
.stack div > svg { width: 18px; height: 18px; margin: -3px 3px 0 0; }
.stack .sel { background: #d6d1cd; border-radius: 0 0 6px 6px; }
.stack s { width: 7.500px; height: 7.500px; border: solid #2e3436; border-width: 2.300px 0 0 2.300px; transform: rotate(45deg); margin: 2px 13px 0 auto; }

.bar { padding-top: 4.500px; display: flex; flex-direction: column; align-items: center; }
.cmds { width: 46px; }
.snaps { width: 46px; }
.bar .t { width: 38px; height: 36.400px; }
.bar .t svg { width: 18px; height: 18px; }
.bar .on { height: 35px; margin: .7px 0; }
.bar hr { width: 38px; height: 14.600px; flex: none; background: linear-gradient(#dedbd8, #dedbd8) 0 7px / 100% 1px no-repeat; }
.more { border: 5px solid transparent; border-left: 5px solid #2e3436; border-right: 0; margin-top: 47px; }
.faint { opacity: .4; fill: #8abf98; stroke: #9ab8a0; stroke-width: 1.600; stroke-dasharray: 2 1.200; }
.faint path { fill: none; }

.palette { height: 22px; width: 1962.500px; display: flex; overflow: hidden; background: #fff; }
.none { width: 19px; height: 22px; flex: none; background: #fff; }
.palette span { width: 19.807px; flex: none; }
.palscroll { height: 14px; width: 1962.500px; background: #cdcdcd; padding: 5px 0 0 3px; }
.palscroll span { display: block; width: 443px; height: 6px; border-radius: 3px; background: #7e8182; }

.status { height: 50px; background: #f6f5f4; display: flex; align-items: center; }
.status > * { flex: none; }
.fs { display: grid; grid-template-columns: 62px 35px; grid-template-rows: 26px 24px; padding: 6px 0 0 1.500px; }
.status label { padding-top: 4px; }
.lo { width: 20px; padding-left: 0; }
.status .spin { height: 56px; margin-top: 6px; }
.status .spin b, .status .spin i { padding-bottom: 3px; }
.so { width: 71px; }
.icons { height: 50px; margin-left: 8px; border-left: 1px solid #dedbd8; width: 77px; display: flex; align-items: center; }
.eye { width: 19px; height: 19px; margin-left: 10px; }
.lk { width: 15px; height: 23px; margin-left: 22px; }
.layer { width: 103px; height: 56px; margin-top: 6px; font-weight: 600; font-size: 15px; padding: 0 0 2px 3px; }
.layer span { margin-right: 2px; }
.status p { margin: 4px 0 0 3px; width: 1192px; white-space: nowrap; font-size: 17.870px; color: #2e3436; }
.xy { width: 102px; height: 50px; border-left: 1px solid #dedbd8; padding: 4px 0 0 10px; display: grid; grid-template-columns: 20px 71px; grid-template-rows: 26px 24px; line-height: 20px; }
.xy span:nth-child(even) { text-align: right; font-size: 18.500px; }
.lz { width: 36px; padding-left: 10px; }
.lr { width: 37px; padding-left: 10px; }
.sz { width: 115px; } .sr { width: 127px; }
.status .sz b { padding-left: 16px; } .status .sr b { padding-left: 22px; }
.sz i, .sr i { width: 22.500px; }

.edge { position: absolute; left: 2040px; top: 0; width: 2px; height: 106px; background: linear-gradient(#555, #111 40%); }
.palmenu { position: absolute; left: 2018px; top: 986px; border: 5px solid transparent; border-right: 6px solid #2e3436; border-left: 0; }
.ink { position: absolute; left: 0; top: 0; fill: none; stroke: #d60604; stroke-width: 7; stroke-linejoin: round; stroke-linecap: butt; pointer-events: none; }
.bright { stroke: #e30b09; stroke-width: 6; }
```
FILE: app.js
```javascript
const NS = "http://www.w3.org/2000/svg";
const STEP = 68.87; // pixels per 50 document units

function add(parent, name, attrs, text) {
  const el = document.createElementNS(NS, name);
  for (const k in attrs) el.setAttribute(k, attrs[k]);
  if (text !== undefined) el.textContent = text;
  parent.appendChild(el);
}

// Horizontal ruler: origin of the page sits 535.3px from the ruler's left end
const h = document.getElementById("hruler");
for (let n = -77; n <= 120; n++) {
  const x = 535.3 + n * STEP / 10;
  if (x < 0) continue;
  const y = n % 10 === 0 ? 0 : n % 5 === 0 ? 9 : 13;
  add(h, "path", { d: `M${x.toFixed(1)} ${y}V19` });
  if (n % 10 === 0 && n < 120) add(h, "text", { x: (x + 3.5).toFixed(1), y: 16 }, n * 5);
}
add(h, "path", { d: "M123 14h11l-5.500 5z", fill: "#333" });

// Vertical ruler: labels are stacked one character per line
const v = document.getElementById("vruler");
for (let n = -30; n <= 88; n++) {
  const y = 205.7 + n * STEP / 10;
  if (y > 818) continue;
  const x = n % 10 === 0 ? 3 : n % 5 === 0 ? 11 : 15;
  if (y > 0) add(v, "path", { d: `M${x} ${y.toFixed(1)}H21` });
  if (n % 10 === 0) {
    [...String(n * 5)].forEach((c, i) =>
      add(v, "text", { x: c === "-" ? 9 : 7, y: (y + 15.6 + i * 13.7).toFixed(1) }, c));
  }
}
add(v, "path", { d: "M21.500 0V819" });
add(v, "path", { d: "M15 279l6 5-6 5z", fill: "#333" });

const colors = ("000 1a1a1a 333 4d4d4d 666 808080 999 b3b3b3 ccc e6e6e6 ececec f2f2f2 f9f9f9 fff " +
  "800000 f00 808000 ff0 008000 0f0 008080 0ff 000080 00f 800080 f0f " +
  "2b0000 500 800000 a00 d40000 f00 ff2a2a f55 ff8080 faa ffd5d5 " +
  "280b0b 501616 782121 a02c2c c83737 d35f5f de8787 e9afaf f4d7d7 " +
  "241c1c 483737 6c5353 916f6f ac9393 c8b7b7 e3dbdb " +
  "2b1100 520 803300 a40 d45500 f60 ff7f2a f95 ffb380 fca ffe6d5 " +
  "28170b 502d16 784421 a05a2c c87137 d38d5f deaa87 e9c6af f4e3d7 " +
  "241f1c 483e37 6c5d53 917c6f ac9d93 c8beb7 e3dedb " +
  "2b2200 540 806600 a80 d4aa00 fc0 ffd42a fd5 ffe680 fea fff6d5 " +
  "28220b 504416 786721 a0892c c8ab37 d3bc5f decd87 e9ddaf").split(" ");
const pal = document.getElementById("palette");
for (const c of colors) {
  const s = document.createElement("span");
  s.style.background = "#" + c;
  pal.appendChild(s);
}
```
